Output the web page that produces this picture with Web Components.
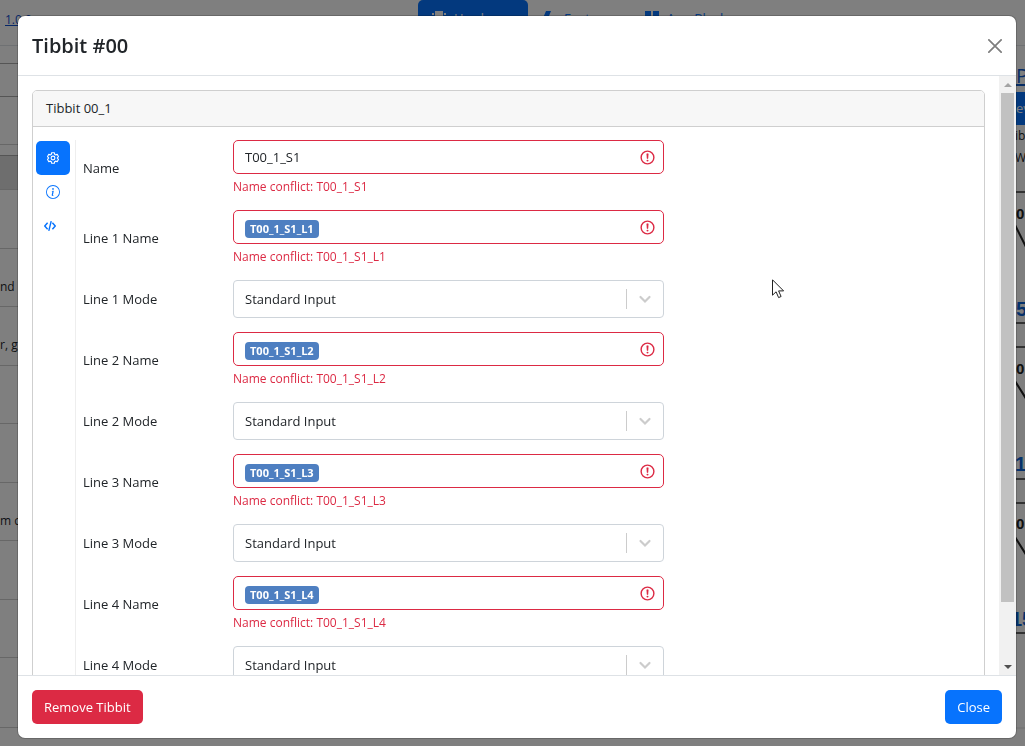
<!DOCTYPE html>
<html lang="en">
<head>
<meta charset="utf-8">
<title>Tibbit #00</title>
<style>
  html, body { margin: 0; height: 100%; overflow: hidden; }
  body {
    background: #fff; color: #212529;
    font: 13px/21px "Open Sans", "Noto Sans", sans-serif;
    --blue: #0773fd; --red: #dc2a44;
  }
</style>
</head>
<body>
<project-page></project-page>
<tibbit-modal heading="Tibbit #00">
  <tibbit-card heading="Tibbit 00_1">
    <side-tabs slot="tabs"></side-tabs>
    <name-field label="Name" value="T00_1_S1"></name-field>
    <name-field tag label="Line 1 Name" value="T00_1_S1_L1"></name-field>
    <mode-field label="Line 1 Mode"></mode-field>
    <name-field tag label="Line 2 Name" value="T00_1_S1_L2"></name-field>
    <mode-field label="Line 2 Mode"></mode-field>
    <name-field tag label="Line 3 Name" value="T00_1_S1_L3"></name-field>
    <mode-field label="Line 3 Mode"></mode-field>
    <name-field tag label="Line 4 Name" value="T00_1_S1_L4"></name-field>
    <mode-field label="Line 4 Mode"></mode-field>
  </tibbit-card>
  <modal-button slot="footer" kind="danger">Remove Tibbit</modal-button>
  <modal-button slot="footer">Close</modal-button>
</tibbit-modal>
<mouse-pointer></mouse-pointer>

<script>
class Base extends HTMLElement {
  connectedCallback() {
    if (this.shadowRoot) return;
    this.attachShadow({ mode: 'open' }).innerHTML =
      `<style>*{box-sizing:border-box}button,input,select{font:inherit;color:inherit;margin:0}</style>` + this.render();
  }
  attr(n) { return this.getAttribute(n) || ''; }
}

/* Project page that lies under the dialog */
customElements.define('project-page', class extends Base {
  render() {
    return `<style>
      :host { display: grid; grid-template: 46px 1fr / 1fr 10px; height: 100vh; overflow: hidden; }
      header { grid-column: 1 / 3; display: grid; grid-template-columns: 418px auto 1fr; border-bottom: 1px solid #dee2e6; align-items: start; }
      header > a { padding: 9px 5px; font-size: 12px; color: #0d4ecf; }
      nav { display: flex; }
      nav a { display: flex; gap: 8px; align-items: center; height: 36px; padding: 0 14px; color: var(--blue); text-decoration: none; }
      nav a.on { background: var(--blue); color: #fff; border-radius: 5px; }
      nav svg { width: 14px; height: 14px; flex: none; }
      .rows { display: flex; flex-direction: column; }
      .rows div { flex: none; height: 58px; border-bottom: 1px solid #cfcfcf; padding-top: 27px; font-size: 12px; white-space: nowrap; overflow: hidden; }
      .rows div:empty { padding: 0; }
      .rows .a { height: 18px; border-color: #aaa; }
      .rows .b { height: 33px; border-color: #aaa; }
      .rows .c { height: 48px; }
      .rows .d { height: 11px; border-color: #aaa; }
      .rows .e { height: 34px; background: #dcdcdc; }
      .rows .g { height: 59px; }
      .rows .h { height: 70px; }
      aside { overflow: hidden; white-space: nowrap; display: flex; flex-direction: column; }
      aside > a { font-size: 20px; line-height: 32px; margin-top: 14px; padding-left: 1px; color: #0a58ca; }
      aside button { height: 33px; border: 0; background: var(--blue); color: #fff; padding: 0 1px; text-align: left; flex: none; }
      aside span { line-height: 22px; font-size: 12px; }
      aside svg { display: block; flex: none; margin-top: 22px; width: 40px; height: 540px; }
    </style>
    <header><a href="#">1.0.0</a>
      <nav>
        <a class="on" href="#"><svg viewBox="0 0 14 14" fill="currentColor"><path d="M3 0h8v14H3zM0 2h2v2H0zM12 2h2v2h-2zM0 7h2v2H0zM12 7h2v2h-2z"/></svg>Hardware</a>
        <a href="#"><svg viewBox="0 0 14 14" fill="currentColor"><path d="M4 0h5L7 5h4L3 14l2-7H1z"/></svg>Features</a>
        <a href="#"><svg viewBox="0 0 14 14" fill="currentColor"><path d="M0 0h6v6H0zM8 0h6v6H8zM0 8h6v6H0zM8 8h6v6H8z"/></svg>App Blocks</a>
      </nav></header>
    <section class="rows"><div class="a"></div><div class="b"></div><div class="c"></div><div class="d"></div><div class="e"></div>
      <div class="g"></div><div>nd</div><div class="g">r, g</div><div></div><div class="g"></div><div>m c</div><div class="g"></div><div></div><div class="h"></div></section>
    <aside><a href="#">P</a><button>ev</button><span>ib</span><span>Wi</span>
      <svg viewBox="0 0 40 540" font-family="Liberation Sans, sans-serif" font-weight="bold">
        <g stroke="#666" stroke-width="2"><path d="M0 1h40M0 132h40M0 156h40M0 288h40M0 312h40M0 442h40"/></g>
        <path d="M0 537h40" stroke="#ddd"/>
        <g stroke="#222" stroke-width="2"><path d="M0 34l30 60M0 190l40 64M0 346l40 64"/></g>
        <g font-size="15" fill="#222"><text x="1" y="28">0</text><text x="1" y="183">0</text><text x="1" y="338">0</text></g>
        <g font-size="20" fill="#0b62d6"><text x="1" y="125">5</text><text x="0" y="280">1</text><text x="-4" y="435">15</text></g>
      </svg></aside>`;
  }
});

customElements.define('tibbit-modal', class extends Base {
  render() {
    return `<style>
      :host { position: fixed; inset: 0; display: flex; padding: 16px 9px 8px 18px; background: rgba(0,0,0,.5); }
      .dialog { flex: 1; min-width: 0; display: flex; flex-direction: column; background: #fff; border-radius: 7px; overflow: hidden; box-shadow: 0 0 0 1px rgba(0,0,0,.18); }
      header { display: flex; justify-content: space-between; align-items: center; height: 60px; flex: none; padding: 0 14px; border-bottom: 1px solid #dee2e6; }
      h5 { margin: 0; font-size: 20px; line-height: 30px; font-weight: 600; }
      header button { border: 0; padding: 0; background: none; width: 14px; height: 14px; display: flex; }
      .body { flex: 1; min-height: 0; display: grid; grid-template-columns: 1fr 17px; grid-template-rows: 100%; }
      .scroll { overflow-y: auto; scrollbar-width: none; padding: 14px; }
      .bar { display: grid; grid-template-rows: 17px 9fr 1fr 17px; background: #f1f1f1; justify-items: center; align-items: center; }
      .bar i { align-self: stretch; width: 13px; background: #c1c1c1; }
      .bar svg { display: block; width: 8px; height: 4px; }
      .bar svg:last-child { grid-row: 4; }
      footer { display: flex; justify-content: space-between; align-items: center; height: 63px; flex: none; padding: 0 14px; border-top: 1px solid #dee2e6; }
    </style>
    <div class="dialog" role="dialog" aria-labelledby="t">
      <header><h5 id="t">${this.attr('heading')}</h5>
        <button aria-label="Dismiss"><svg viewBox="0 0 16 16" width="14" height="14"><path d="M1 1l14 14M15 1L1 15" stroke="#7f7f7f" stroke-width="2" stroke-linecap="round"/></svg></button></header>
      <div class="body"><div class="scroll"><slot></slot></div>
        <div class="bar" aria-hidden="true"><svg viewBox="0 0 8 4"><path d="M0 4l4-4 4 4z" fill="#a3a3a3"/></svg><i></i><svg viewBox="0 0 8 4"><path d="M0 0l4 4 4-4z" fill="#505050"/></svg></div></div>
      <footer><slot name="footer"></slot></footer>
    </div>`;
  }
});

customElements.define('modal-button', class extends Base {
  render() {
    return `<style>
      :host { display: block; }
      button { height: 34px; border: 0; border-radius: 5px; padding: 0 12px; background: var(--blue); color: #fff; display: block; }
      :host([kind=danger]) button { background: var(--red); }
    </style><button><slot></slot></button>`;
  }
});

customElements.define('tibbit-card', class extends Base {
  render() {
    return `<style>
      :host { display: block; border: 1px solid #cfcfcf; border-radius: 5px; overflow: hidden; }
      .head { height: 36px; padding: 7px 13px; background: #f7f7f7; border-bottom: 1px solid #cfcfcf; }
      .body { display: grid; grid-template-columns: 42px minmax(0, 1fr); padding: 13px 13px 13px 3px; }
      .tabs { border-right: 1px solid #eee; width: 40px; }
      .fields { display: flex; flex-direction: column; gap: 14px; padding-left: 5px; }
      .fields ::slotted(name-field:first-child) { margin-top: 0; }
    </style>
    <div class="head">${this.attr('heading')}</div>
    <div class="body"><div class="tabs"><slot name="tabs"></slot></div><div class="fields"><slot></slot></div></div>`;
  }
});

customElements.define('side-tabs', class extends Base {
  render() {
    return `<style>
      :host { display: flex; flex-direction: column; align-items: flex-start; padding-top: 1px; }
      button { display: flex; align-items: center; justify-content: center; width: 34px; height: 34px; padding: 0; border: 0; border-radius: 5px; background: none; color: var(--blue); }
      .on { background: var(--blue); color: #fff; }
      .code { width: 28px; }
      svg { fill: currentColor; display: block; }
    </style>
    <button class="on" aria-label="Settings"><svg width="12" height="12" viewBox="0 0 24 24"><g fill="none" stroke="currentColor" stroke-width="2.200" stroke-linejoin="round"><path d="M9.300 1.500h5.400l.8 3.300 1.600.9 3.300-1 2.700 4.700-2.500 2.300v.6l2.500 2.300-2.700 4.700-3.300-1-1.600.9-.8 3.300H9.300l-.8-3.300-1.600-.9-3.300 1L.9 14.600l2.500-2.300v-.6L.9 9.400l2.700-4.700 3.300 1 1.600-.9z"/><circle cx="12" cy="12" r="3.800"/></g></svg></button>
    <button aria-label="Information"><svg width="14" height="14" viewBox="0 0 16 16"><path d="M8 15A7 7 0 1 1 8 1a7 7 0 0 1 0 14zm0 1A8 8 0 1 0 8 0a8 8 0 0 0 0 16z"/><path d="m8.930 6.588-2.290.287-.082.380.450.083c.294.070.352.176.288.469l-.738 3.468c-.194.897.105 1.319.808 1.319.545 0 1.178-.252 1.465-.598l.088-.416c-.200.176-.492.246-.686.246-.275 0-.375-.193-.304-.533L8.930 6.588zM9 4.500a1 1 0 1 1-2 0 1 1 0 0 1 2 0z"/></svg></button>
    <button class="code" aria-label="Code"><svg width="12" height="12" viewBox="0 0 16 16"><path d="M4.800 3.600L1 8l3.800 4.400M11.200 3.600L15 8l-3.800 4.400M9.600 1.500L6.400 14.500" fill="none" stroke="currentColor" stroke-width="1.900"/></svg></button>`;
  }
});

const fieldCss = `
  :host { display: grid; grid-template-columns: 150px minmax(0, 431px); align-items: center; }
  input { border: 0; outline: 0; padding: 0; background: none; flex: 1; min-width: 0; }`;

customElements.define('name-field', class extends Base {
  render() {
    const tag = this.hasAttribute('tag'), v = this.attr('value');
    return `<style>${fieldCss}
      .box { display: flex; align-items: center; gap: 8px; height: 34px; padding: 0 7px 0 11px; border: 1px solid var(--red); border-radius: 5px; }
      .tag { height: 18px; margin-top: 3px; padding: 0 5px; border-radius: 4px; background: #4e7fc1; color: #fff; font-size: 11px; line-height: 18px; font-weight: 700; }
      .error { height: 22px; padding-top: 4px; color: var(--red); font-size: 12px; line-height: 18px; }
    </style>
    <label for="f">${this.attr('label')}</label>
    <div><div class="box">${tag ? `<span class="tag">${v}</span>` : ''}<input id="f" value="${tag ? '' : v}">
      <svg width="17" height="17" viewBox="0 0 12 12" fill="#dc2a44"><circle cx="6" cy="6" r="4.500" fill="none" stroke="#dc2a44"/><path d="M5.500 3.400h1L6.300 6.700h-.6z" stroke="#dc2a44" stroke-width=".4"/><circle cx="6" cy="8.200" r=".7"/></svg></div>
      <div class="error">Name conflict: ${v}</div></div>`;
  }
});

customElements.define('mode-field', class extends Base {
  render() {
    return `<style>${fieldCss}
      .pick { display: grid; align-items: center; }
      .pick > * { grid-area: 1 / 1; }
      select { appearance: none; width: 100%; height: 38px; padding: 0 48px 0 11px; border: 1px solid #ced4da; border-radius: 4px; background: #fff; }
      svg { justify-self: end; margin-right: 8px; pointer-events: none; }
    </style>
    <label for="f">${this.attr('label')}</label>
    <div class="pick"><select id="f"><option>Standard Input</option></select>
      <svg width="30" height="20" viewBox="0 0 30 20"><path d="M.5 0v20" stroke="#ccc"/><path d="M14.500 8l4.500 4.500L23.500 8" fill="none" stroke="#ccc" stroke-width="2.200" stroke-linecap="round"/></svg></div>`;
  }
});

customElements.define('mouse-pointer', class extends Base {
  render() {
    return `<style>:host { position: absolute; left: 772px; top: 279px; pointer-events: none; } svg { display: block; }</style>
    <svg width="13" height="20" viewBox="0 0 13 20"><path d="M.5.800v15.400l3.600-3.400 2.500 5.800 2.500-1.100-2.500-5.600h5z" fill="#fff" stroke="#222"/></svg>`;
  }
});
</script>
</body>
</html>
